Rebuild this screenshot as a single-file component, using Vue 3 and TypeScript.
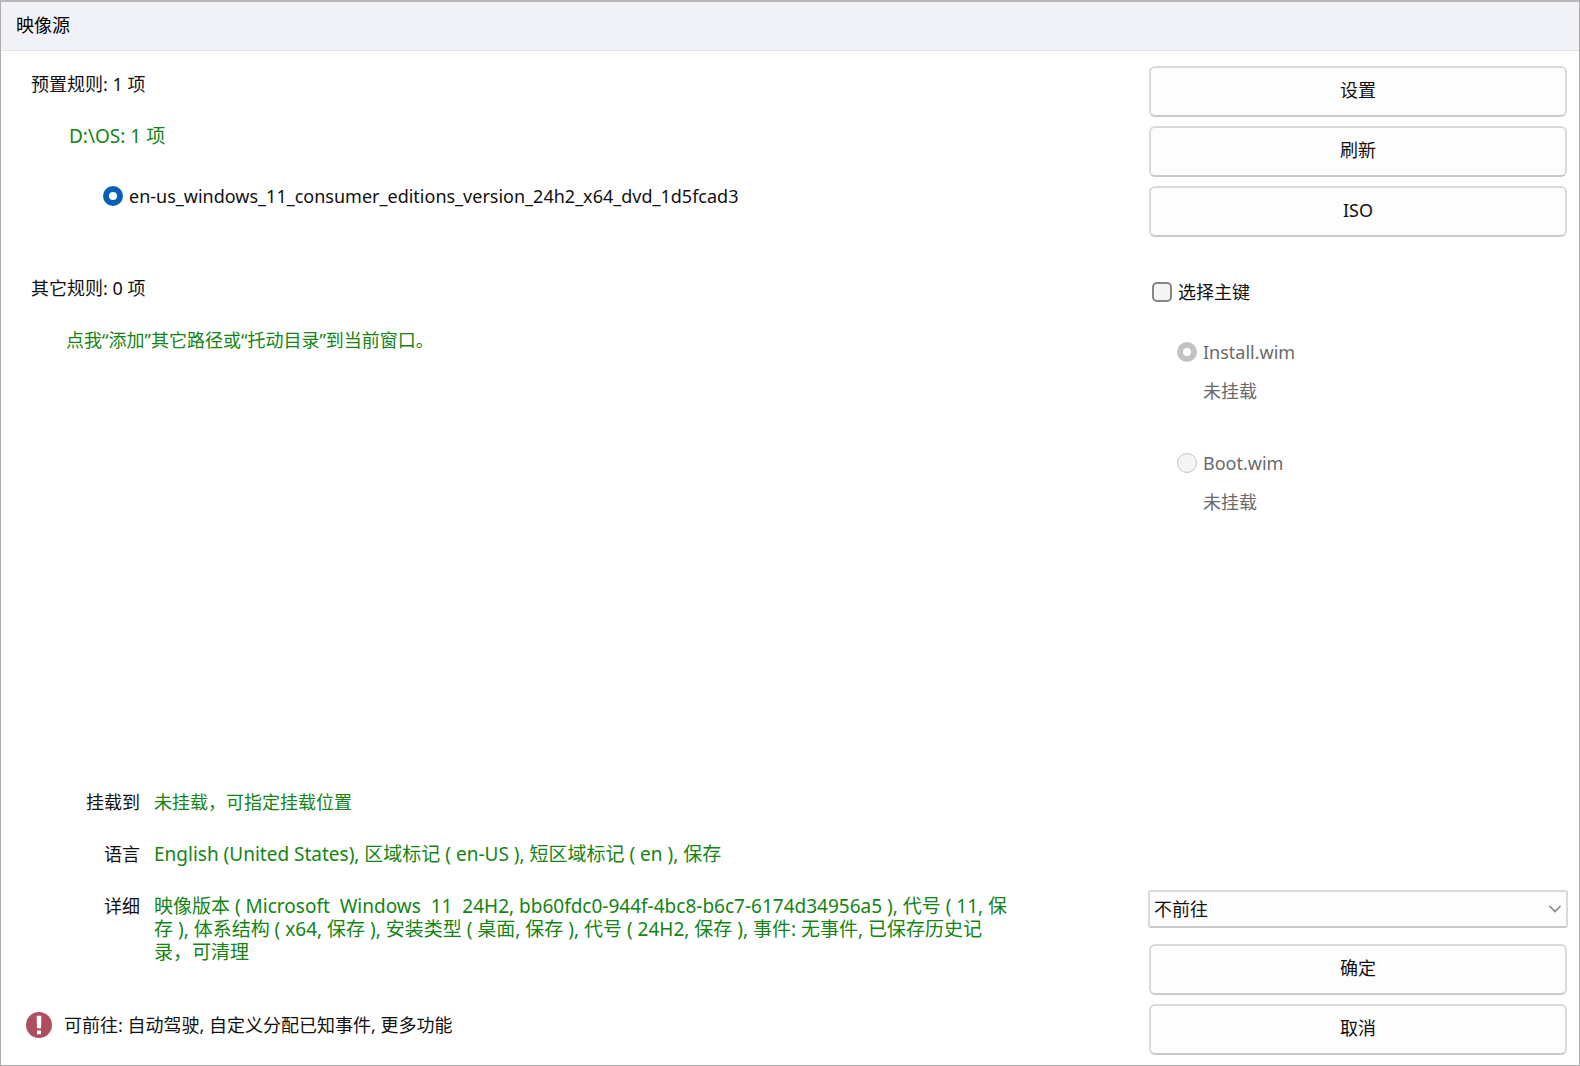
<script setup lang="ts">
import { ref } from 'vue'

interface ImageSource {
  id: string
  name: string
}

interface WimFile {
  name: string
  status: string
}

interface Detail {
  label: string
  text: string
  mixed: boolean
}

const sources: ImageSource[] = [
  { id: 'src-1', name: 'en-us_windows_11_consumer_editions_version_24h2_x64_dvd_1d5fcad3' },
]
const wimFiles: WimFile[] = [
  { name: 'Install.wim', status: '未挂载' },
  { name: 'Boot.wim', status: '未挂载' },
]
const details: Detail[] = [
  { label: '挂载到', text: '未挂载，可指定挂载位置', mixed: false },
  {
    label: '语言',
    text: 'English (United States), 区域标记 ( en-US ), 短区域标记 ( en ), 保存',
    mixed: true,
  },
  {
    label: '详细',
    text: '映像版本 ( Microsoft  Windows  11  24H2, bb60fdc0-944f-4bc8-b6c7-6174d34956a5 ), 代号 ( 11, 保存 ), 体系结构 ( x64, 保存 ), 安装类型 ( 桌面, 保存 ), 代号 ( 24H2, 保存 ), 事件: 无事件, 已保存历史记录，可清理',
    mixed: true,
  },
]
const tools: string[] = ['设置', '刷新', 'ISO']
const actions: string[] = ['确定', '取消']

const selectedSource = ref<string>('src-1')
const selectedWim = ref<string>('Install.wim')
const usePrimaryKey = ref<boolean>(false)
const destination = ref<string>('none')
</script>

<template>
  <div class="window" lang="zh-CN">
    <header class="titlebar">映像源</header>
    <div class="body">
      <main class="sources">
        <section class="rules">
          <h2>预置规则: 1 项</h2>
          <a class="path mixed" href="#">D:\OS: 1 项</a>
          <label v-for="s in sources" :key="s.id" class="choice source">
            <input v-model="selectedSource" type="radio" name="source" :value="s.id" />
            <span>{{ s.name }}</span>
          </label>
        </section>
        <section class="rules">
          <h2>其它规则: 0 项</h2>
          <a class="path hint" href="#">点我“添加”其它路径或“托动目录”到当前窗口。</a>
        </section>

        <dl class="details">
          <template v-for="d in details" :key="d.label">
            <dt>{{ d.label }}</dt>
            <dd :class="{ mixed: d.mixed }"><a href="#">{{ d.text }}</a></dd>
          </template>
        </dl>
        <p class="notice">
          <svg width="26" height="26" viewBox="0 0 26 26" aria-hidden="true">
            <circle cx="13" cy="13" r="13" fill="#ae4e60" />
            <path d="M10.6 3.8h4.8l-.4 12.4h-4zM11 18.4h4v3.8h-4z" fill="#fff" />
          </svg>
          <span>可前往: 自动驾驶, 自定义分配已知事件, 更多功能</span>
        </p>
      </main>

      <aside class="side">
        <div class="buttons">
          <button v-for="t in tools" :key="t" type="button">{{ t }}</button>
        </div>
        <div class="keys">
          <label class="choice">
            <input v-model="usePrimaryKey" type="checkbox" />
            <span>选择主键</span>
          </label>
          <div v-for="w in wimFiles" :key="w.name" class="wim">
            <label class="choice">
              <input v-model="selectedWim" type="radio" name="wim" :value="w.name" :disabled="!usePrimaryKey" />
              <span>{{ w.name }}</span>
            </label>
            <p>{{ w.status }}</p>
          </div>
        </div>
        <div class="goto">
          <select v-model="destination" aria-label="可前往">
            <option value="none">不前往</option>
          </select>
          <svg width="14" height="10" viewBox="0 0 14 10" aria-hidden="true">
            <path d="M1.5 2 7 7.5 12.5 2" fill="none" stroke="#858585" stroke-width="1.6" />
          </svg>
        </div>
        <div class="buttons">
          <button v-for="a in actions" :key="a" type="button">{{ a }}</button>
        </div>
      </aside>
    </div>
  </div>
</template>

<style>
body {
  margin: 0;
  background: #fff;
}
</style>

<style scoped>
* {
  box-sizing: border-box;
}
.window {
  display: flex;
  flex-direction: column;
  min-height: 100vh;
  border: 1px solid #adadad;
  border-top: 2px solid #b8b8b8;
  background: #fff;
  color: #111;
  font-family: 'Noto Sans', 'Noto Sans CJK SC', sans-serif;
  font-size: 18px;
  line-height: 24px;
}
.titlebar {
  padding: 11px 15px 13px;
  border-bottom: 1px solid #e2e2e4;
  background: #f1f2f7;
  color: #000;
}
.body {
  display: flex;
  flex: 1;
  justify-content: space-between;
  gap: 40px;
}
.sources {
  display: flex;
  flex: 1;
  flex-direction: column;
  padding: 21px 0 27px 30px;
}
h2,
p,
dl,
dd {
  margin: 0;
}
h2 {
  font-size: 18px;
  font-weight: 400;
}
a {
  color: #148414;
  text-decoration: none;
}
.mixed {
  font-size: 19px;
}
.rules {
  display: flex;
  flex-direction: column;
  align-items: flex-start;
  margin-bottom: 68px;
}
.path {
  margin: 28px 0 0 38px;
}
.hint {
  margin-left: 35px;
}
.choice {
  display: flex;
  align-items: center;
  gap: 6px;
}
.source {
  margin: 36px 0 0 72px;
}
input {
  flex: none;
  width: 20px;
  height: 20px;
  margin: 0;
  border: 1px solid #868686;
  background: #f5f5f5;
  appearance: none;
}
input[type='radio'] {
  border-radius: 50%;
}
input[type='radio']:checked {
  border: 6px solid #0660b4;
  background: #fff;
}
input[type='checkbox'] {
  border: 2px solid #868686;
  border-radius: 5px;
}
input:disabled {
  border-color: #c4c4c4;
}
input[type='radio']:disabled:checked {
  border-color: #c2c2c2;
}
.details {
  display: grid;
  grid-template-columns: 109px minmax(0, 856px);
  column-gap: 14px;
  row-gap: 29px;
  margin-top: auto;
  line-height: 23px;
}
dt {
  text-align: right;
}
dd a {
  white-space: pre-wrap;
}
.notice {
  display: flex;
  align-items: center;
  gap: 12px;
  margin: 48px 0 0 -5px;
}
.side {
  display: flex;
  flex-direction: column;
  width: 420px;
  flex: none;
  margin-right: 11px;
  padding: 15px 0 10px;
}
.buttons {
  display: flex;
  flex-direction: column;
  gap: 9px;
  padding: 0 1px;
}
button {
  height: 51px;
  padding: 0 8px 4px;
  border: 2px solid #d9d9d9;
  border-bottom-color: #cacaca;
  border-radius: 6px;
  background: #fdfdfd;
  color: #111;
  font: inherit;
}
.keys {
  margin: 43px 0 auto;
  padding-left: 4px;
}
.wim {
  margin: 36px 0 48px 25px;
  color: #6a6a6a;
}
.wim p {
  margin: 15px 0 0 26px;
}
.goto {
  position: relative;
  margin-bottom: 16px;
}
.goto svg {
  position: absolute;
  right: 6px;
  top: 14px;
  pointer-events: none;
}
select {
  display: block;
  width: 100%;
  height: 38px;
  padding: 0 28px 0 4px;
  border: 2px solid #d9d9d9;
  border-bottom-color: #cacaca;
  border-radius: 3px;
  background: #fdfdfd;
  color: #111;
  font: inherit;
  appearance: none;
}
</style>
